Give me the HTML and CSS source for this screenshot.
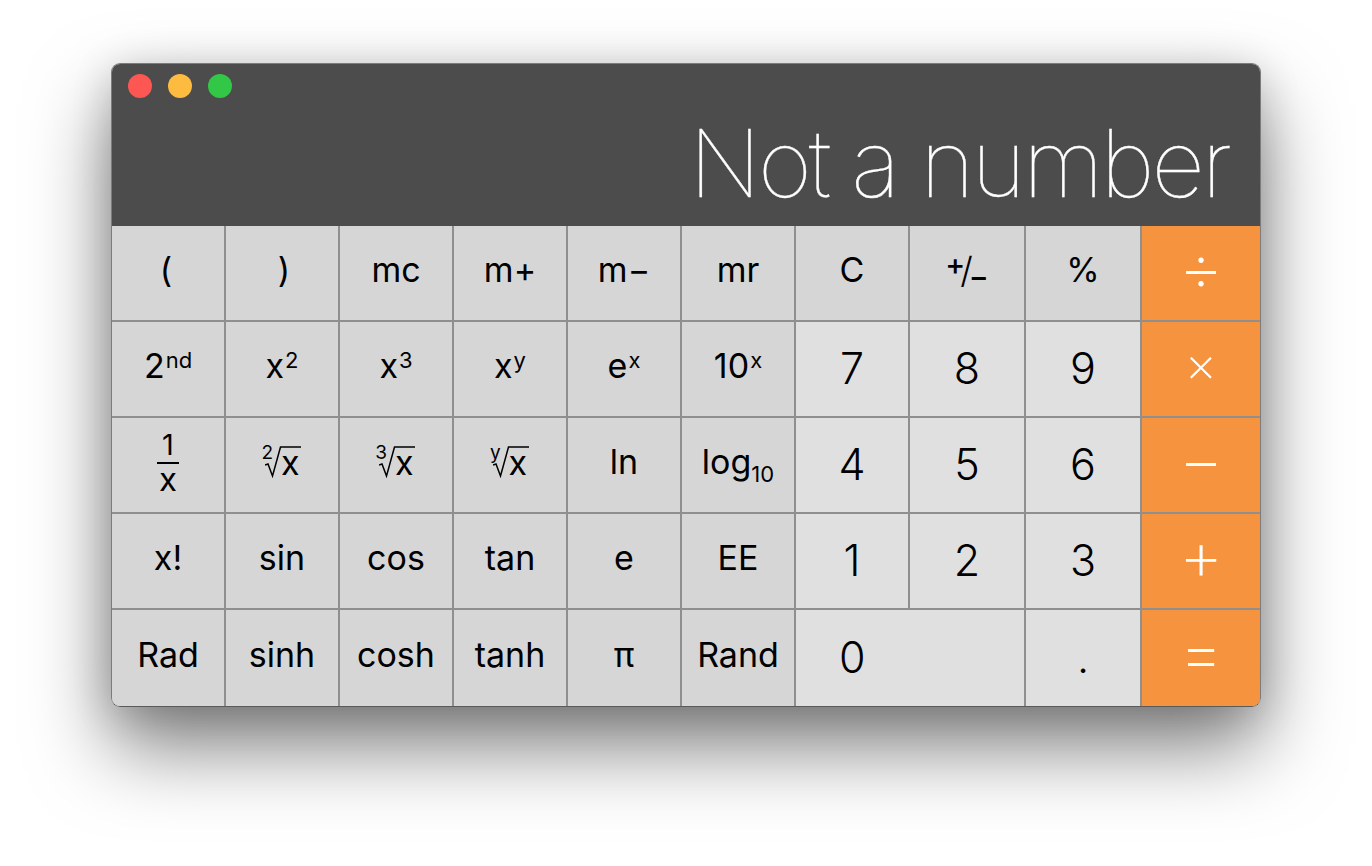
FILE: index.html
```html
<!DOCTYPE html>
<html lang="en">
<head>
  <meta charset="UTF-8">
  <title>Calculator</title>
  <link rel="stylesheet" href="styles.css">
</head>
<body>

  <div class="window">
    <div class="display">
      <div class="lights">
        <span class="light light-close"></span>
        <span class="light light-min"></span>
        <span class="light light-max"></span>
      </div>
      <div class="result">Not a number</div>
    </div>

    <div class="keys">
      <button class="key key-lparen">(</button>
      <button class="key key-rparen">)</button>
      <button class="key">mc</button>
      <button class="key">m+</button>
      <button class="key">m&minus;</button>
      <button class="key">mr</button>
      <button class="key">C</button>
      <button class="key"><span class="plusminus"><span class="pm-plus">+</span><span class="pm-slash">/</span><span class="pm-minus">&minus;</span></span></button>
      <button class="key">%</button>
      <button class="key key-op key-wide">&divide;</button>

      <button class="key">2<sup>nd</sup></button>
      <button class="key">x<sup>2</sup></button>
      <button class="key">x<sup>3</sup></button>
      <button class="key">x<sup>y</sup></button>
      <button class="key">e<sup>x</sup></button>
      <button class="key">10<sup>x</sup></button>
      <button class="key key-num">7</button>
      <button class="key key-num">8</button>
      <button class="key key-num">9</button>
      <button class="key key-op">&times;</button>

      <button class="key"><span class="frac"><span class="frac-top">1</span><span class="frac-low">x</span></span></button>
      <button class="key">
        <span class="root">
          <span class="root-idx">2</span>
          <svg class="root-sign" width="36" height="32" viewBox="0 0 36 32"><path d="M0 19 L3 18 L7.5 30 L15.5 1 H36" fill="none" stroke="#000" stroke-width="1.5"/></svg>
          <span class="root-arg">x</span>
        </span>
      </button>
      <button class="key">
        <span class="root">
          <span class="root-idx">3</span>
          <svg class="root-sign" width="36" height="32" viewBox="0 0 36 32"><path d="M0 19 L3 18 L7.5 30 L15.5 1 H36" fill="none" stroke="#000" stroke-width="1.5"/></svg>
          <span class="root-arg">x</span>
        </span>
      </button>
      <button class="key">
        <span class="root">
          <span class="root-idx">y</span>
          <svg class="root-sign" width="36" height="32" viewBox="0 0 36 32"><path d="M0 19 L3 18 L7.5 30 L15.5 1 H36" fill="none" stroke="#000" stroke-width="1.5"/></svg>
          <span class="root-arg">x</span>
        </span>
      </button>
      <button class="key">ln</button>
      <button class="key">log<sub>10</sub></button>
      <button class="key key-num">4</button>
      <button class="key key-num">5</button>
      <button class="key key-num">6</button>
      <button class="key key-op key-wide">&minus;</button>

      <button class="key">x!</button>
      <button class="key">sin</button>
      <button class="key">cos</button>
      <button class="key">tan</button>
      <button class="key">e</button>
      <button class="key">EE</button>
      <button class="key key-num">1</button>
      <button class="key key-num">2</button>
      <button class="key key-num">3</button>
      <button class="key key-op key-wide">+</button>

      <button class="key">Rad</button>
      <button class="key">sinh</button>
      <button class="key">cosh</button>
      <button class="key">tanh</button>
      <button class="key">&pi;</button>
      <button class="key">Rand</button>
      <button class="key key-num key-zero">0</button>
      <button class="key key-num">.</button>
      <button class="key key-op key-wide">=</button>
    </div>
  </div>

</body>
</html>
```

FILE: styles.css
```css
body {
  margin: 0;
  min-height: 100vh;
  box-sizing: border-box;
  padding: 63px 111px;
  background: #fff;
  font-family: Inter, "Liberation Sans", sans-serif;
}
.window {
  width: 1150px;
  height: 644px;
  box-sizing: border-box;
  border: 1px solid #7c7c7c;
  border-bottom-color: #5a5a5a;
  border-radius: 9px;
  overflow: hidden;
  box-shadow: 0 40px 80px rgba(0, 0, 0, 0.5), 0 6px 40px rgba(0, 0, 0, 0.16);
}
.display {
  height: 162px;
  box-sizing: border-box;
  padding: 10px 31px 0 16px;
  background: #4c4c4c;
}
.lights {
  display: flex;
  gap: 16px;
}
.light {
  width: 24px;
  height: 24px;
  border-radius: 50%;
}
.light-close { background: #fc5753; }
.light-min { background: #fdbc40; }
.light-max { background: #33c748; }
.result {
  margin-top: 10px;
  text-align: right;
  color: #fff;
  font-size: 93px;
  font-weight: 100;
  line-height: 110px;
  letter-spacing: -3px;
  -webkit-text-stroke: 0.4px #fff;
}
.keys {
  display: grid;
  grid-template-columns: repeat(7, 112px) 114px 114px 118px;
  grid-template-rows: repeat(4, 94px) 96px;
  gap: 2px;
  background: #8f8f8f;
}
.key {
  display: flex;
  align-items: center;
  justify-content: center;
  padding: 0 0 6px;
  border: 0;
  background: #d6d6d6;
  color: #000;
  font-family: inherit;
  font-size: 34px;
  font-weight: 400;
  line-height: 1;
}
.key sup {
  align-self: flex-start;
  font-size: 22px;
  font-weight: 400;
  margin: 27px 0 0 1px;
}
.key sub {
  align-self: flex-end;
  font-size: 22px;
  font-weight: 400;
  margin: 0 0 21px 0;
}
.key-lparen { padding-right: 4px; }
.key-rparen { padding-left: 4px; }
.key-num {
  background: #e0e0e0;
  font-size: 43px;
  font-weight: 300;
  padding-bottom: 2px;
}
.key-zero {
  grid-column: span 2;
  justify-content: flex-start;
  padding-left: 43px;
}
.key-op {
  background: #f6933e;
  color: #fff;
  font-size: 50px;
  font-weight: 200;
  padding-bottom: 10px;
}
.key-wide {
  font-size: 70px;
  font-weight: 200;
  padding-bottom: 12px;
}
.frac {
  display: flex;
  flex-direction: column;
  align-items: center;
  line-height: 30px;
}
.frac-top {
  font-size: 29px;
}
.frac-low {
  border-top: 2px solid #000;
  margin-top: 2px;
  padding: 0 2px;
  font-size: 33px;
}
.root {
  display: flex;
  align-items: flex-start;
  padding-right: 3px;
}
.root-idx {
  font-size: 19px;
  font-weight: 400;
  line-height: 18px;
  margin-top: -2px;
}
.root-sign {
  flex: none;
  margin-left: -8px;
}
.root-arg {
  margin: 2px 0 0 -20px;
  line-height: 30px;
}
.plusminus {
  display: flex;
  align-items: center;
}
.pm-plus {
  font-size: 30px;
  font-weight: 500;
  margin: -12px -5px 0 0;
}
.pm-slash {
  font-size: 36px;
  font-weight: 300;
}
.pm-minus {
  font-size: 30px;
  font-weight: 500;
  margin: 12px 0 0 -4px;
}
```
